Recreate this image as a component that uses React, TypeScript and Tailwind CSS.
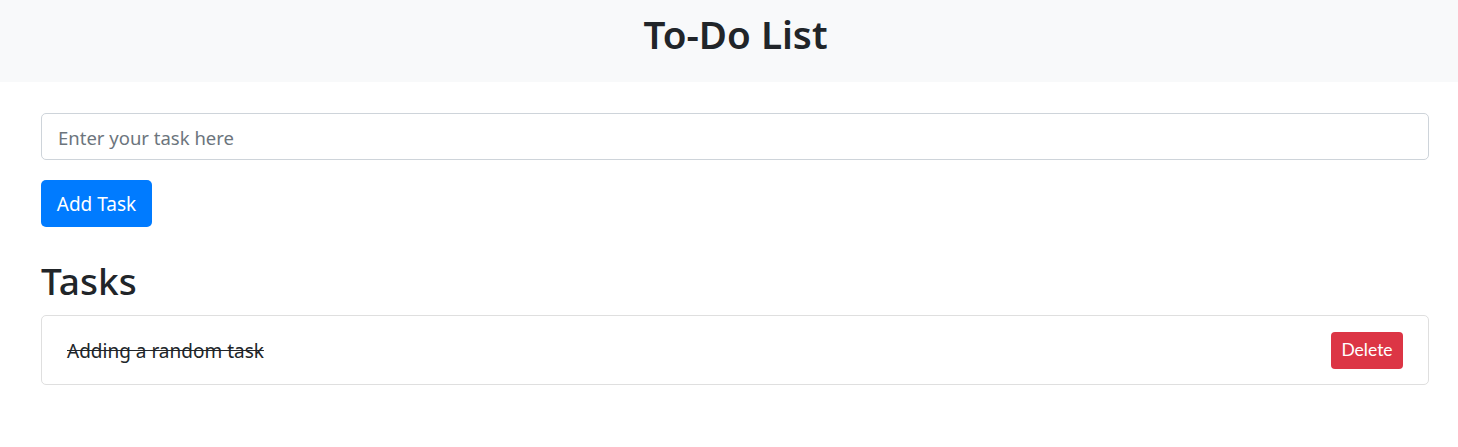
import React, { useState } from "react";

type Task = { id: number; text: string; done: boolean };

const font = "font-['Segoe_UI','Noto_Sans',sans-serif]";

export default function App() {
  const [value, setValue] = useState("");
  const [tasks, setTasks] = useState<Task[]>([
    { id: 1, text: "Adding a random task", done: true },
  ]);

  const addTask = () => {
    if (!value.trim()) return;
    setTasks([...tasks, { id: Date.now(), text: value.trim(), done: false }]);
    setValue("");
  };

  return (
    <div className={`min-h-[447px] bg-white text-[#212529] ${font}`}>
      {/* Header */}
      <header className="h-[82px] pb-[14px] pl-[13px] bg-[#f8f9fa] flex items-center justify-center">
        <h1 className="text-[38.6px] font-semibold leading-[1.2]">To-Do List</h1>
      </header>

      <main className="pl-[41px] pr-[29px] pt-[31px]">
        <input
          value={value}
          onChange={(e) => setValue(e.target.value)}
          placeholder="Enter your task here"
          className="block w-full h-[47px] px-4 pt-[2px] text-[18.5px] border border-[#ced4da] rounded-[5px] placeholder:text-[#6c757d] outline-none"
        />

        <button
          onClick={addTask}
          className="mt-[20px] h-[47px] w-[111px] pt-[2px] bg-[#007bff] text-white text-[19px] rounded-[5px]"
        >
          Add Task
        </button>

        <h2 className="mt-[30px] text-[37px] font-medium leading-[48px]">Tasks</h2>

        <ul className="mt-[10px] border border-[#dfdfdf] rounded-[5px]">
          {tasks.map((t) => (
            <li
              key={t.id}
              className="h-[68px] pl-[25px] pr-[25px] flex items-center justify-between border-b border-[#dfdfdf] last:border-b-0"
            >
              <span
                onClick={() =>
                  setTasks(tasks.map((x) => (x.id === t.id ? { ...x, done: !x.done } : x)))
                }
                className={`pt-[3px] text-[19px] cursor-pointer ${t.done ? "line-through" : ""}`}
              >
                {t.text}
              </span>
              <button
                onClick={() => setTasks(tasks.filter((x) => x.id !== t.id))}
                className="h-[37px] w-[72px] bg-[#dc3545] text-white text-[17.5px] rounded-[4px] font-['Lato',sans-serif]"
              >
                Delete
              </button>
            </li>
          ))}
        </ul>
      </main>
    </div>
  );
}
